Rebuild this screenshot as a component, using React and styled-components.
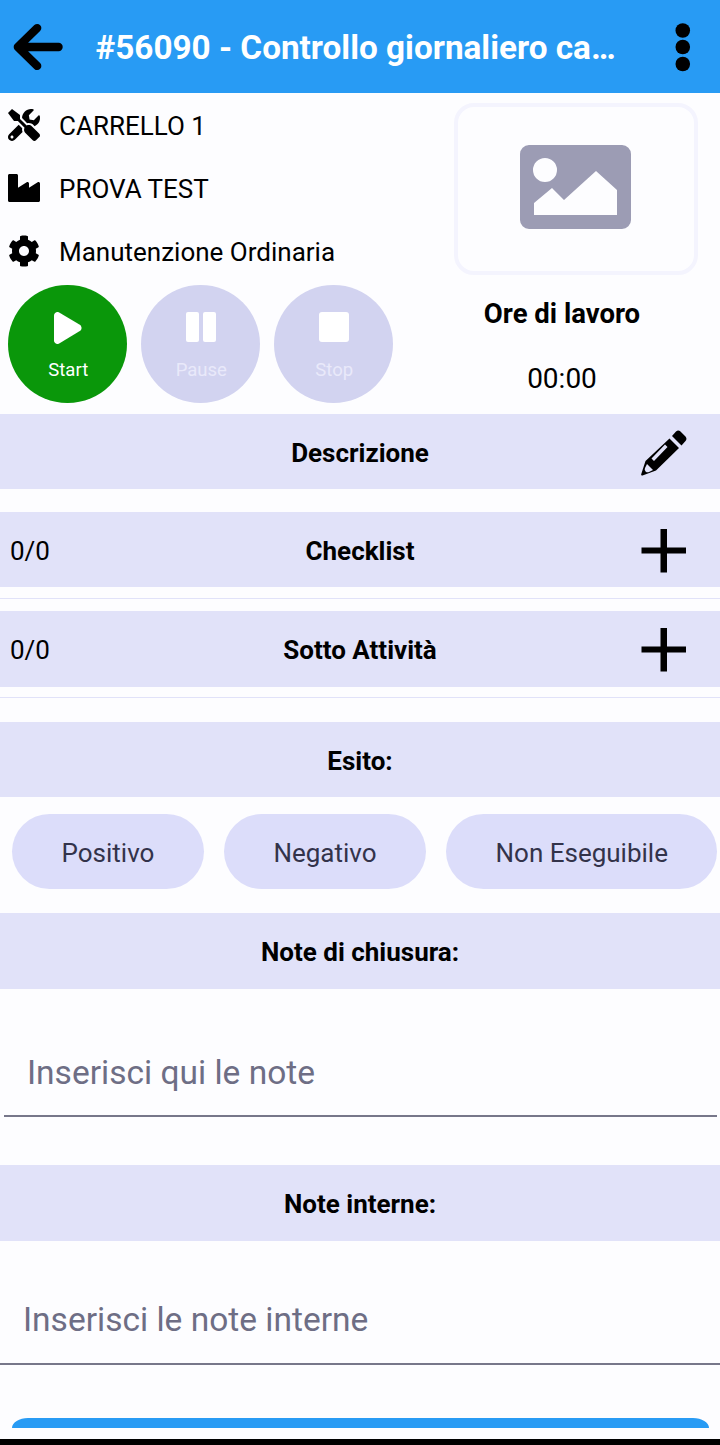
import styled, { createGlobalStyle } from 'styled-components';
import { FaTools, FaIndustry, FaCog } from 'react-icons/fa';

const GlobalStyle = createGlobalStyle`
  html, body {
    margin: 0;
    padding: 0;
    background: #fdfdff;
  }
`;

const BackIcon = () => (
  <svg width='54' height='50' viewBox='0 0 54 50' fill='none' stroke='#000' strokeWidth='8.5' strokeLinecap='round' strokeLinejoin='round'>
    <path d='M7 25h42M27 5.500 7 25l20 19.500' />
  </svg>
);

const MoreIcon = () => (
  <svg width='16' height='50' viewBox='0 0 16 50' fill='#000'>
    <circle cx='8' cy='8' r='7.5' />
    <circle cx='8' cy='25' r='7.5' />
    <circle cx='8' cy='42.5' r='7.5' />
  </svg>
);

const PictureIcon = () => (
  <svg width='112' height='84' viewBox='0 0 112 84'>
    <path
      fill='#9c9cb4'
      fillRule='evenodd'
      d='M9 0h93a9 9 0 0 1 9 9v66a9 9 0 0 1-9 9H9a9 9 0 0 1-9-9V9a9 9 0 0 1 9-9Zm16 13a12 12 0 1 0 0 24 12 12 0 0 0 0-24ZM14 70h83V45L76 26 44 55 32 43 14 58Z'
    />
  </svg>
);

const PlayIcon = () => (
  <svg width='28' height='32' viewBox='0 0 28 32' fill='#fff'>
    <path d='M0 3.500C0 .8 2.800-.9 5.200.4l20.600 12.300c2.300 1.400 2.300 5 0 6.400L5.200 31.600C2.800 32.900 0 31.200 0 28.500Z' />
  </svg>
);

const PauseIcon = () => (
  <svg width='30' height='30' viewBox='0 0 30 30' fill='#fff'>
    <rect x='0' y='0' width='13' height='30' rx='2' />
    <rect x='17' y='0' width='13' height='30' rx='2' />
  </svg>
);

const StopIcon = () => (
  <svg width='30' height='30' viewBox='0 0 30 30' fill='#fff'>
    <rect width='30' height='30' rx='3' />
  </svg>
);

const PencilIcon = () => (
  <svg width='46' height='46' viewBox='0 0 46 46'>
    <path
      fill='#000'
      fillRule='evenodd'
      d='M35 1.500a3.500 3.500 0 0 1 4.500 0l5 5a3.500 3.500 0 0 1 0 4.500l-4 4.500-9.500-9.500ZM28.500 8.500l9.500 9.500L15 40.500 1.500 45.500a1 1 0 0 1-1.300-1.300L4.500 31Zm-4.500 6L10.500 28.500l2.500 2.500L26.500 17Z'
    />
    <path fill='#e3e4fb' d='M6 34l6 6-4 2a3 3 0 0 1-4-4Z' />
  </svg>
);

const PlusIcon = () => (
  <svg width='46' height='46' viewBox='0 0 46 46' fill='#000'>
    <path d='M19.500 1h6.500v18.500H45v6H26v19h-6.500v-19H.5v-6h19Z' />
  </svg>
);

const App = () => (
  <Page>
    <GlobalStyle />
    <Header>
      <BackIcon />
      <Title>#56090 - Controllo giornaliero ca…</Title>
      <MoreIcon />
    </Header>

    <Summary>
      <div>
        <InfoRow><FaTools /><span>CARRELLO 1</span></InfoRow>
        <InfoRow><FaIndustry /><span>PROVA TEST</span></InfoRow>
        <InfoRow><FaCog /><span>Manutenzione Ordinaria</span></InfoRow>
        <Controls>
          <RoundButton $active><PlayIcon /><span>Start</span></RoundButton>
          <RoundButton><PauseIcon /><span>Pause</span></RoundButton>
          <RoundButton><StopIcon /><span>Stop</span></RoundButton>
        </Controls>
      </div>
      <Side>
        <PictureBox><PictureIcon /></PictureBox>
        <Hours>Ore di lavoro</Hours>
        <Clock>00:00</Clock>
      </Side>
    </Summary>

    <Band $top={11}>
      <span />
      <strong>Descrizione</strong>
      <BandAction><PencilIcon /></BandAction>
    </Band>

    <Band $top={23}>
      <Count>0/0</Count>
      <strong>Checklist</strong>
      <BandAction><PlusIcon /></BandAction>
    </Band>
    <Divider $top={11} />

    <Band $top={12} $tall>
      <Count>0/0</Count>
      <strong>Sotto Attività</strong>
      <BandAction><PlusIcon /></BandAction>
    </Band>
    <Divider $top={10} />

    <Band $top={24}>
      <span />
      <strong>Esito:</strong>
    </Band>

    <Outcomes>
      <Outcome>Positivo</Outcome>
      <Outcome>Negativo</Outcome>
      <Outcome>Non Eseguibile</Outcome>
    </Outcomes>

    <Band $top={24} $tall>
      <span />
      <strong>Note di chiusura:</strong>
    </Band>
    <NoteInput $first placeholder='Inserisci qui le note' />

    <Band $top={48} $tall>
      <span />
      <strong>Note interne:</strong>
    </Band>
    <NoteInput placeholder='Inserisci le note interne' />

    <SaveButton />
    <NavBar />
  </Page>
);

export default App;

const Page = styled.div`
  width: 720px;
  height: 1445px;
  overflow: hidden;
  display: flex;
  flex-direction: column;
  background: #fdfdff;
  font-family: 'Roboto', sans-serif;
  color: #000;
`;

const Header = styled.header`
  flex: none;
  height: 93px;
  box-sizing: border-box;
  padding: 0 29px 0 11px;
  display: flex;
  align-items: center;
  background: #289bf4;
`;

const Title = styled.h1`
  flex: none;
  width: 520px;
  margin: 2px 60px 0 32px;
  white-space: nowrap;
  font-size: 33.300px;
  font-weight: 700;
  color: #fff;
`;

const Summary = styled.section`
  flex: none;
  display: grid;
  grid-template-columns: 404px 316px;
`;

const InfoRow = styled.div`
  height: 63px;
  box-sizing: border-box;
  padding: 2px 0 0 8px;
  display: flex;
  align-items: center;
  gap: 19px;
  font-size: 26px;
  white-space: nowrap;
  svg {
    flex: none;
    width: 32px;
    height: 32px;
    margin-top: -2px;
  }
`;

const Controls = styled.div`
  margin-top: 3px;
  padding-left: 8px;
  display: flex;
  gap: 14.500px;
`;

const RoundButton = styled.div`
  width: 118.500px;
  height: 118px;
  box-sizing: border-box;
  padding: 27px 0 22px 2px;
  border-radius: 50%;
  display: flex;
  flex-direction: column;
  align-items: center;
  background: ${(p) => (p.$active ? '#0a970a' : '#d2d3f0')};
  color: ${(p) => (p.$active ? '#fff' : '#e9e9fa')};
  font-size: 18.500px;
  line-height: 22px;
  span {
    margin-top: auto;
  }
`;

const Side = styled.div`
  padding-top: 10px;
  display: flex;
  flex-direction: column;
  align-items: center;
`;

const PictureBox = styled.div`
  width: 244px;
  height: 172px;
  box-sizing: border-box;
  margin-left: 28px;
  padding-bottom: 4px;
  border: 4px solid #f4f4fe;
  border-radius: 20px;
  display: flex;
  align-items: center;
  justify-content: center;
`;

const Hours = styled.div`
  margin-top: 24px;
  font-size: 27.500px;
  line-height: 30px;
  font-weight: 700;
`;

const Clock = styled.div`
  margin-top: 33px;
  font-size: 28px;
  line-height: 34px;
`;

const Band = styled.div`
  flex: none;
  height: ${(p) => (p.$tall ? 76 : 75)}px;
  margin-top: ${(p) => p.$top}px;
  padding-top: 2px;
  box-sizing: border-box;
  display: grid;
  grid-template-columns: 1fr auto 1fr;
  align-items: center;
  background: #e1e2f9;
  font-size: 26px;
  strong {
    font-weight: 700;
  }
`;

const Count = styled.span`
  padding-left: 10px;
`;

const BandAction = styled.div`
  justify-self: end;
  height: 46px;
  margin-right: 33px;
`;

const Divider = styled.div`
  flex: none;
  height: 1px;
  margin-top: ${(p) => p.$top}px;
  background: #e1e2f9;
`;

const Outcomes = styled.div`
  flex: none;
  margin-top: 17px;
  padding-left: 12px;
  display: flex;
  gap: 20px;
`;

const Outcome = styled.div`
  height: 75px;
  box-sizing: border-box;
  padding: 2px 49.500px 0;
  border-radius: 38px;
  display: flex;
  align-items: center;
  background: #dcddfa;
  color: #33334a;
  font-size: 26px;
  white-space: nowrap;
`;

const NoteInput = styled.input`
  flex: none;
  display: block;
  height: ${(p) => (p.$first ? 128 : 124)}px;
  margin: 0 ${(p) => (p.$first ? 3 : 0)}px 0 ${(p) => (p.$first ? 4 : 0)}px;
  padding: ${(p) => (p.$first ? 40 : 34)}px 0 0 23px;
  box-sizing: border-box;
  border: 0;
  border-bottom: 2px solid #77778a;
  background: transparent;
  outline: none;
  font-family: inherit;
  font-size: 33.500px;
  &::placeholder {
    color: #6e6e85;
    opacity: 1;
  }
`;

const SaveButton = styled.div`
  flex: none;
  height: 10px;
  margin: 53px 11px 0 12px;
  border-radius: 16px 16px 0 0 / 10px 10px 0 0;
  background: #289bf4;
`;

const NavBar = styled.div`
  flex: none;
  height: 6px;
  margin-top: 11px;
  background: #000;
`;
